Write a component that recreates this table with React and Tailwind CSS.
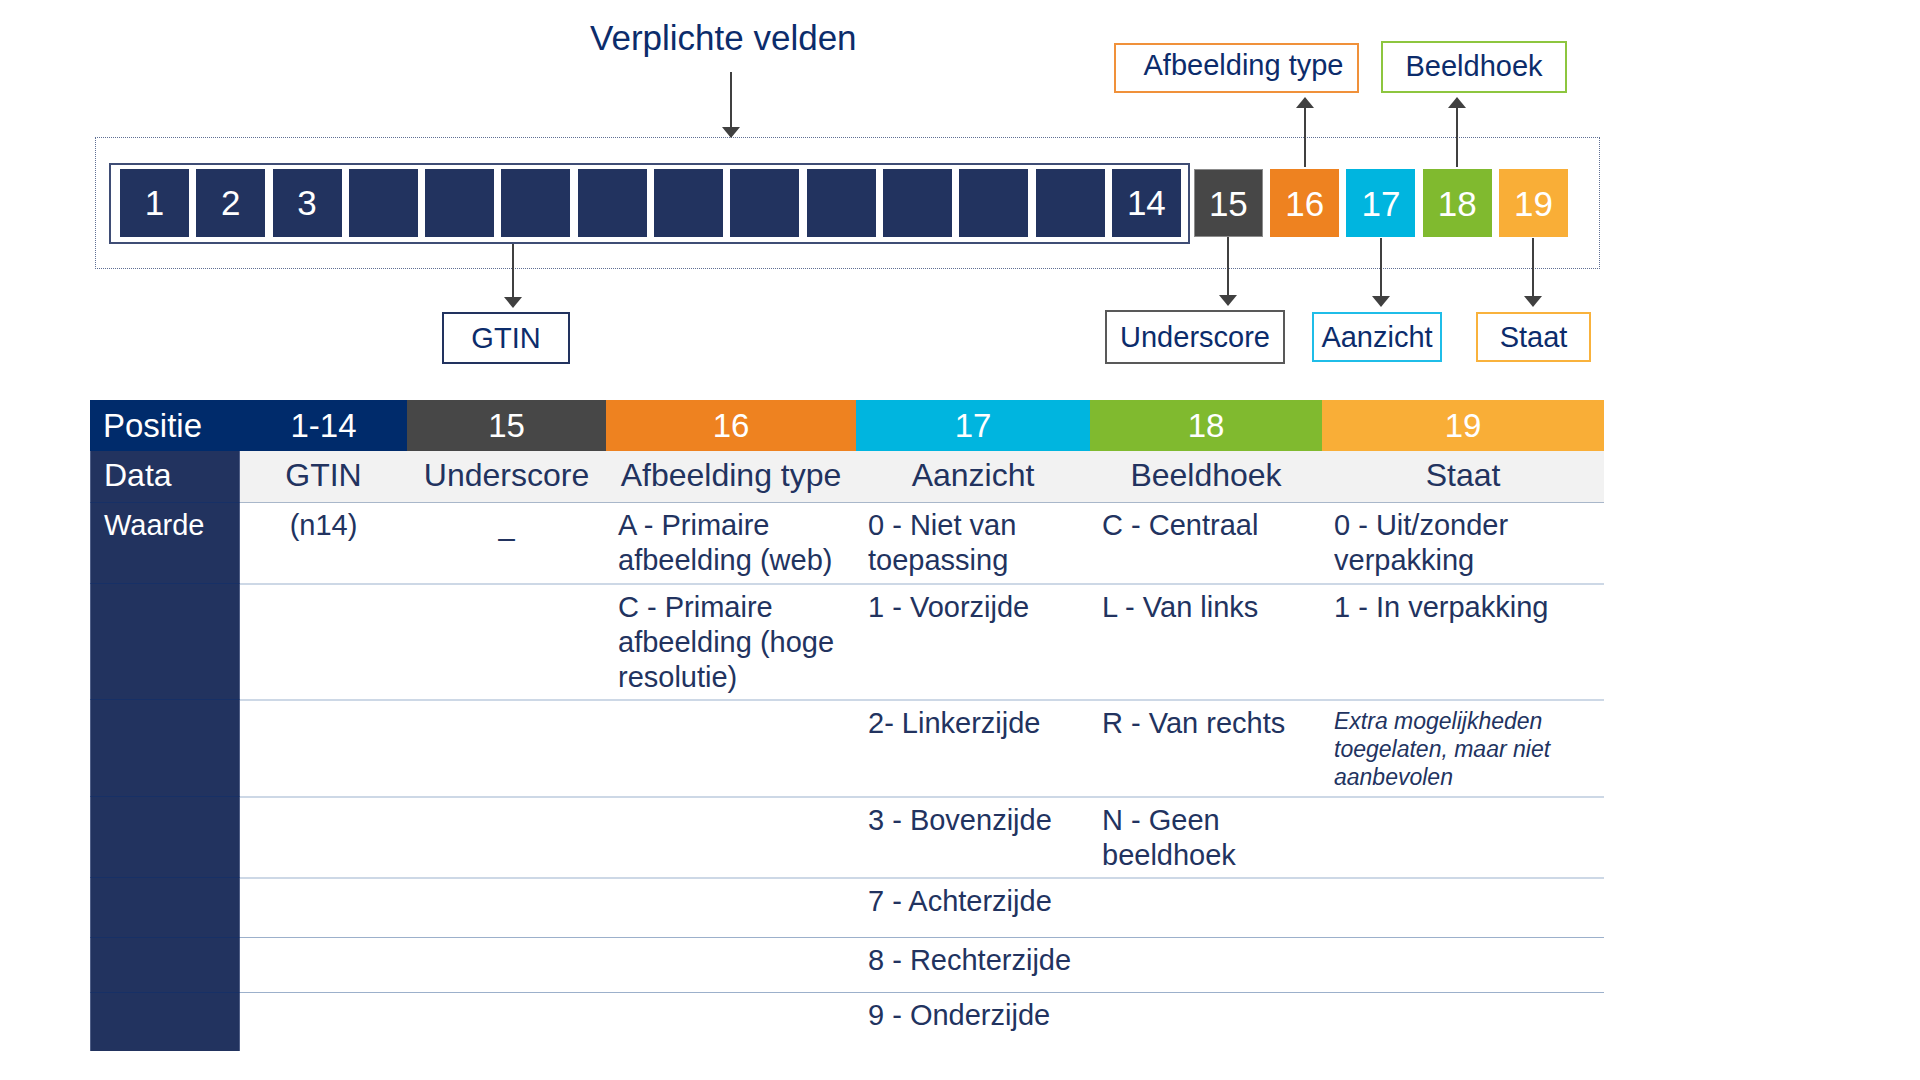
const cols = 'grid grid-cols-[150px_167px_199px_250px_234px_232px_282px]';

const Arrow = ({ className, len, up }) => (
  <svg className={`absolute ${className}`} width="20" height={len} viewBox={`0 0 20 ${len}`}>
    {up ? (
      <>
        <line x1="10" y1="10" x2="10" y2={len} stroke="#404040" strokeWidth="2" />
        <polygon points="1,11 19,11 10,0" fill="#404040" />
      </>
    ) : (
      <>
        <line x1="10" y1="0" x2="10" y2={len - 10} stroke="#404040" strokeWidth="2" />
        <polygon points={`1,${len - 11} 19,${len - 11} 10,${len}`} fill="#404040" />
      </>
    )}
  </svg>
);

const Square = ({ children, className }) => (
  <div className={`w-[69px] h-[68px] flex items-center justify-center text-white text-[35px] leading-none ${className}`}>
    {children}
  </div>
);

const navyNums = ['1', '2', '3', '', '', '', '', '', '', '', '', '', '', '14'];

const bodyRows = [
  {
    h: 'h-[81px]',
    line: 'border-t border-[#a9b7ca]',
    left: 'Waarde',
    cells: ['(n14)', '_', 'A - Primaire afbeelding (web)', '0 - Niet van toepassing', 'C - Centraal', '0 - Uit/zonder verpakking'],
  },
  {
    h: 'h-[116px]',
    line: 'border-t-2 border-[#cdd8e6]',
    cells: ['', '', 'C - Primaire afbeelding (hoge resolutie)', '1 - Voorzijde', 'L - Van links', '1 - In verpakking'],
  },
  {
    h: 'h-[97px]',
    line: 'border-t-2 border-[#cdd8e6]',
    cells: ['', '', '', '2- Linkerzijde', 'R - Van rechts', 'italic'],
  },
  {
    h: 'h-[81px]',
    line: 'border-t-2 border-[#cdd8e6]',
    cells: ['', '', '', '3 - Bovenzijde', 'N - Geen beeldhoek', ''],
  },
  {
    h: 'h-[60px]',
    line: 'border-t-2 border-[#cdd8e6]',
    cells: ['', '', '', '7 - Achterzijde', '', ''],
  },
  {
    h: 'h-[55px]',
    line: 'border-t border-[#9cb0cb]',
    cells: ['', '', '', '8 - Rechterzijde', '', ''],
  },
  {
    h: 'h-[59px]',
    line: 'border-t border-[#9cb0cb]',
    cells: ['', '', '', '9 - Onderzijde', '', ''],
  },
];

export default function App() {
  return (
    <div className="w-[1920px] h-[1080px] bg-white overflow-hidden font-['Liberation_Sans',Arial,sans-serif]">
      {/* diagram */}
      <div className="relative h-[400px] pt-[137px] pl-[95px]">
        <div className="absolute left-[590px] top-[20px] text-[35px] leading-none text-[#0c2c6b]">Verplichte velden</div>
        <Arrow className="left-[721px] top-[72px]" len={66} />

        <div className="absolute left-[1114px] top-[43px] w-[245px] h-[50px] border-2 border-[#f0913a] flex items-center justify-center pl-[14px] pb-[6px] text-[29px] leading-none text-[#0c2c6b]">
          Afbeelding type
        </div>
        <div className="absolute left-[1381px] top-[41px] w-[186px] h-[52px] border-2 border-[#8dc63f] flex items-center justify-center pb-[2px] text-[29px] leading-none text-[#0c2c6b]">
          Beeldhoek
        </div>
        <Arrow up className="left-[1295px] top-[97px]" len={70} />
        <Arrow up className="left-[1447px] top-[97px]" len={70} />

        <div className="w-[1505px] h-[132px] border border-dotted border-[#5f6f94] flex items-center pl-[13px]">
          <div className="border-2 border-[#3f4d75] pl-[9px] pr-[7px] pt-[4px] pb-[5px] flex gap-[7.3px]">
            {navyNums.map((n, i) => (
              <Square key={i} className="bg-[#22335f]">{n}</Square>
            ))}
          </div>
          <div className="ml-[4px] flex gap-[7.3px]">
            <Square className="bg-[#474747] border border-[#8c8c8c]">15</Square>
            <Square className="bg-[#ee8220]">16</Square>
            <Square className="bg-[#00b5df]">17</Square>
            <Square className="bg-[#80ba2f]">18</Square>
            <Square className="bg-[#f9ae37]">19</Square>
          </div>
        </div>

        <Arrow className="left-[503px] top-[244px]" len={64} />
        <Arrow className="left-[1218px] top-[237px]" len={69} />
        <Arrow className="left-[1371px] top-[238px]" len={69} />
        <Arrow className="left-[1523px] top-[238px]" len={69} />

        <div className="absolute left-[442px] top-[312px] w-[128px] h-[52px] border-2 border-[#22335f] flex items-center justify-center text-[29px] leading-none text-[#0c2c6b]">
          GTIN
        </div>
        <div className="absolute left-[1105px] top-[310px] w-[180px] h-[54px] border-2 border-[#595959] flex items-center justify-center text-[29px] leading-none text-[#0c2c6b]">
          Underscore
        </div>
        <div className="absolute left-[1312px] top-[312px] w-[130px] h-[50px] border-2 border-[#1fbde8] flex items-center justify-center text-[29px] leading-none text-[#0c2c6b]">
          Aanzicht
        </div>
        <div className="absolute left-[1476px] top-[312px] w-[115px] h-[50px] border-2 border-[#f9b23c] flex items-center justify-center text-[29px] leading-none text-[#0c2c6b]">
          Staat
        </div>
      </div>

      {/* table */}
      <div className="ml-[90px] w-[1514px]">
        <div className={`${cols} h-[51px] text-white text-[33px] leading-none`}>
          <div className="bg-[#002b6b] flex items-center pl-[13px]">Positie</div>
          <div className="bg-[#002b6b] flex items-center justify-center">1-14</div>
          <div className="bg-[#474747] flex items-center justify-center">15</div>
          <div className="bg-[#ee8220] flex items-center justify-center">16</div>
          <div className="bg-[#00b5df] flex items-center justify-center">17</div>
          <div className="bg-[#80ba2f] flex items-center justify-center">18</div>
          <div className="bg-[#f9ae37] flex items-center justify-center">19</div>
        </div>
        <div className={`${cols} h-[51px] text-[32px] leading-none text-[#22335f] bg-[#f2f2f2]`}>
          <div className="bg-[#22335f] text-white flex items-center pl-[13px] pb-[3px] border-x border-[#4f5e86]">Data</div>
          {['GTIN', 'Underscore', 'Afbeelding type', 'Aanzicht', 'Beeldhoek', 'Staat'].map((t) => (
            <div key={t} className="flex items-center justify-center pb-[3px]">{t}</div>
          ))}
        </div>
        {bodyRows.map((row, r) => (
          <div key={r} className={`${cols} ${row.h} text-[29px] leading-[35px] text-[#22335f]`}>
            <div className="bg-[#22335f] text-white pl-[13px] pt-[5px] border-x border-[#4f5e86] border-t border-t-[#173066]">
              {row.left}
            </div>
            {row.cells.map((c, i) => (
              <div key={i} className={`${row.line} pt-[5px] ${i < 2 ? 'text-center' : 'pl-[12px] pr-[6px]'}`}>
                {c === 'italic' ? (
                  <div className="italic text-[23px] leading-[28px] pt-[1px]">
                    Extra mogelijkheden toegelaten, maar niet aanbevolen
                  </div>
                ) : (
                  c
                )}
              </div>
            ))}
          </div>
        ))}
      </div>
    </div>
  );
}
